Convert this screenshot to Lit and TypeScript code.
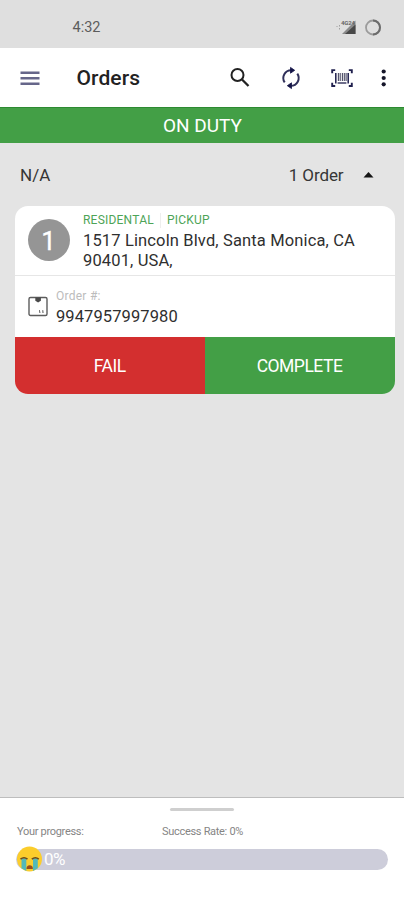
import { LitElement, html, css } from "lit";
import { customElement } from "lit/decorators.js";

@customElement("status-bar")
class StatusBar extends LitElement {
  static styles = css`
    :host { display: flex; height: 48px; box-sizing: border-box; padding: 17px 22px 0 72.5px; background: #dfdfdf; align-items: flex-start; }
    .time { flex: 1; font-size: 14.5px; line-height: 21px; color: #5c5c5c; }
    svg { display: block; }
    .net { font: 700 6px Roboto, sans-serif; fill: #666; }
  `;
  render() {
    return html`
      <div class="time">4:32</div>
      <svg width="46" height="20" viewBox="0 0 46 20">
        <path d="M3.5 8v1.5M3.5 11v1.5M1 9v1" stroke="#a0a0a0" stroke-width="1" />
        <path d="M6 17 19.5 3.5V17Z" fill="#8a8a8a" />
        <path d="M9 17 19.5 7.5V17Z" fill="#484848" />
        <text class="net" x="5" y="8" textLength="14">4G24</text>
        <circle cx="37" cy="10.5" r="7" fill="none" stroke="#9c9c9c" stroke-width="1.8" />
        <path d="M37 3.5a7 7 0 0 1 0 14" fill="none" stroke="#6c6c6c" stroke-width="2" />
      </svg>
    `;
  }
}

@customElement("app-bar")
class AppBar extends LitElement {
  static styles = css`
    :host { display: flex; height: 59px; background: #fff; align-items: center; padding: 0 9px 0 18px; }
    svg { display: block; flex: none; }
    h1 { flex: 1; margin: 0 0 0 34.5px; font-size: 21px; line-height: 30px; font-weight: 500; color: #222; letter-spacing: 0.1px; padding-top: 1px; }
    .refresh { margin-left: 27px; }
    .scan { margin-left: 27px; }
    .more { margin-left: 17.5px; }
  `;
  render() {
    return html`
      <svg width="24" height="24" viewBox="0 0 24 24"><path d="M2.5 6.8h19M2.5 12.2h19M2.5 17.8h19" stroke="#66668a" stroke-width="2.5" /></svg>
      <h1>Orders</h1>
      <svg width="24" height="24" viewBox="0 0 24 24"><circle cx="9.5" cy="9" r="6" fill="none" stroke="#222" stroke-width="2" /><path d="m14 13.5 6.5 6.5" stroke="#222" stroke-width="2.3" /></svg>
      <svg class="refresh" width="24" height="24" viewBox="0 0 24 24">
        <path d="M12.5 4.2A7.8 7.8 0 0 0 5.7 16.4M11.8 19.8A7.8 7.8 0 0 0 18.3 7.6" fill="none" stroke="#30305a" stroke-width="2" />
        <path d="M11.5 1.4v5.8l4.2-2.9ZM12.5 16.8v5.8L8.3 19.7Z" fill="#141447" stroke="#141447" stroke-width=".8" />
      </svg>
      <svg class="scan" width="24" height="24" viewBox="0 0 24 24">
        <path d="M2.2 7.2V4.1h3M18.8 4.1h3v3.1M2.2 16.8V20h3M18.8 20h3v-3.2" fill="none" stroke="#20204e" stroke-width="1.9" />
        <path d="M5.8 7v10.5M18.2 7v10.5" stroke="#20204e" stroke-width="1.5" />
        <path d="M8.4 7v8M10.2 7v8M12.4 7v8M14.3 7v8M16.1 7v8" stroke="#4c4c66" stroke-width="1.1" />
        <path d="M7.6 17h8.8" stroke="#30305a" stroke-width="1.4" />
      </svg>
      <svg class="more" width="24" height="24" viewBox="0 0 24 24" fill="#16162a"><circle cx="12.7" cy="5.5" r="2.1" /><circle cx="12.7" cy="12" r="2.1" /><circle cx="12.7" cy="18.3" r="2.1" /></svg>
    `;
  }
}

@customElement("order-card")
class OrderCard extends LitElement {
  static styles = css`
    :host { display: block; margin: 0 9.5px 0 15px; height: 188px; border-radius: 13px; overflow: hidden; background: #fff; }
    .stop { display: flex; height: 70px; box-sizing: border-box; border-bottom: 1px solid #e6e6e6; }
    .num { flex: none; width: 42px; height: 42px; margin: 13.5px 0 0 13px; border-radius: 50%; background: #959595; color: #fff; font-size: 26px; line-height: 44px; text-align: center; text-indent: -1px; -webkit-text-stroke: 0.3px #fff; }
    .info { margin-left: 13px; padding-top: 7.5px; }
    .tags { display: flex; font-size: 12px; line-height: 15px; color: #4da457; letter-spacing: 0.22px; }
    .tags span + span { margin-left: 6px; padding-left: 6px; border-left: 1px solid #eee; }
    .addr { font-size: 16.5px; line-height: 19.5px; color: #2f2f2f; white-space: nowrap; letter-spacing: 0.14px; margin-top: 3px; }
    .order { display: flex; height: 61px; }
    .order svg { display: block; margin: 19px 0 0 13px; flex: none; }
    .meta { margin-left: 8px; padding-top: 13px; }
    .label { font-size: 12px; line-height: 15px; color: #bcbcbc; letter-spacing: 0.25px; }
    .value { font-size: 16.5px; line-height: 20px; color: #2f2f2f; letter-spacing: 0.1px; margin-top: 3px; }
    .actions { display: grid; grid-template-columns: 189.5px 1fr; height: 57px; text-align: center; color: #fff; font-size: 17.5px; line-height: 59px; letter-spacing: -0.5px; }
    .fail { background: #d32f2f; }
    .done { background: #439f46; }
  `;
  render() {
    return html`
      <div class="stop">
        <div class="num">1</div>
        <div class="info">
          <div class="tags"><span>RESIDENTAL</span><span>PICKUP</span></div>
          <div class="addr">1517 Lincoln Blvd, Santa Monica, CA<br />90401, USA,</div>
        </div>
      </div>
      <div class="order">
        <svg width="20" height="22" viewBox="0 0 20 22">
          <rect x="1" y="2.5" width="18" height="18" rx="1.5" fill="none" stroke="#5c5c5c" stroke-width="1.4" />
          <path d="M7.3 2.5h5.6v3.2L10.1 7.4 7.3 5.7Z" fill="#4a4a4a" />
          <path d="M11.5 15v2.4M14.8 15v2.4M11 17.2h1.6M14.2 17.2h1.6" stroke="#777" stroke-width="1" />
        </svg>
        <div class="meta"><div class="label">Order #:</div><div class="value">9947957997980</div></div>
      </div>
      <div class="actions"><div class="fail">FAIL</div><div class="done">COMPLETE</div></div>
    `;
  }
}

@customElement("progress-sheet")
class ProgressSheet extends LitElement {
  static styles = css`
    :host { display: block; height: 103px; box-sizing: border-box; background: #fff; border-top: 1.5px solid #bdbdbd; }
    .handle { width: 64px; height: 3px; margin: 9.5px auto 0; border-radius: 2px; background: #cfcfcf; }
    .labels { display: grid; grid-template-columns: 145px 1fr; margin: 13px 17px 0; font-size: 11px; line-height: 16px; color: #858585; letter-spacing: -0.3px; }
    .bar { display: flex; align-items: center; height: 21px; margin: 9px 16px 0; border-radius: 11px; background: #cdcdda; }
    .bar svg { display: block; margin: 0 2px 0 0; flex: none; }
    .pct { color: #fff; font-size: 17px; line-height: 21px; letter-spacing: -0.6px; }
  `;
  render() {
    return html`
      <div class="handle"></div>
      <div class="labels"><span>Your progress:</span><span>Success Rate: 0%</span></div>
      <div class="bar">
        <svg width="26" height="26" viewBox="0 0 26 26">
          <circle cx="13.5" cy="13" r="12.5" fill="#fbcd2c" />
          <path d="M5.5 12.5h4.8V25l-4.8-2.8ZM17 12.5h4.8v9.7L17 25Z" fill="#54b9b8" />
          <path d="M4.5 13.2q3.5-2.8 7 0M15.8 13.2q3.5-2.8 7 0" fill="none" stroke="#654b22" stroke-width="1.6" />
          <path d="M10.5 23q0-3.7 3.2-3.7t3.2 3.7Z" fill="#9a4c1c" />
        </svg>
        <span class="pct">0%</span>
      </div>
    `;
  }
}

@customElement("app-root")
class AppRoot extends LitElement {
  static styles = css`
    :host { display: flex; flex-direction: column; height: 900px; background: #e4e4e4; font-family: Roboto, sans-serif; overflow: hidden; }
    .duty { box-sizing: border-box; height: 36px; background: #439f46; border-top: 1.5px solid #2d8a31; color: #fff; text-align: center; font-size: 19px; line-height: 36px; text-indent: 1px; }
    .group { display: flex; align-items: center; height: 62.5px; box-sizing: border-box; padding: 2px 29px 0 20px; font-size: 17px; line-height: 22px; color: #363636; }
    .name { flex: 1; }
    .count { letter-spacing: -0.1px; }
    .group svg { display: block; margin-left: 18.5px; }
    .space { flex: 1; }
  `;
  render() {
    return html`
      <status-bar></status-bar>
      <app-bar></app-bar>
      <div class="duty">ON DUTY</div>
      <div class="group">
        <span class="name">N/A</span><span class="count">1 Order</span>
        <svg width="13" height="8" viewBox="0 0 13 8"><path d="M1.5 6.5h10L6.5 1Z" fill="#151515" /></svg>
      </div>
      <order-card></order-card>
      <div class="space"></div>
      <progress-sheet></progress-sheet>
    `;
  }
}
